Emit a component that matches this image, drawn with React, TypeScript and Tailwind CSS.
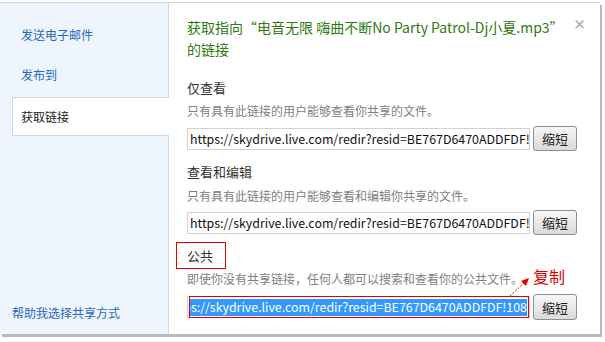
import React from 'react';

const URL_TEXT = 'https://skydrive.live.com/redir?resid=BE767D6470ADDFDF!108';

const ShortenButton: React.FC<{ tall?: boolean }> = ({ tall }) => (
  <button
    className={`ml-[3px] w-[44px] shrink-0 ${tall ? 'h-[26px]' : 'h-[25px]'} rounded-[3px] border border-[#8e8e8e] bg-gradient-to-b from-[#f7f7f7] to-[#dadada] text-[13px] leading-none text-[#222]`}
  >
    缩短
  </button>
);

const LinkRow: React.FC = () => (
  <div className="flex items-center">
    <div className="h-[22px] w-[343px] shrink-0 overflow-hidden whitespace-nowrap border border-[#d2d2d2] bg-white pl-[2px] text-[12.4px] leading-[20px] text-[#111]">
      {URL_TEXT}
    </div>
    <ShortenButton />
  </div>
);

const App: React.FC = () => {
  return (
    <div className="relative h-[342px] w-[605px] overflow-hidden bg-white font-['Noto_Sans_CJK_SC',sans-serif]">
      <div className="mt-[2px] flex h-[332px] w-[600px] border-t border-[#d4d4d4] shadow-[2px_3px_0_#b9b9b9]">
        {/* Side menu */}
        <div className="flex w-[169px] shrink-0 flex-col border-r border-[#cdd8e6] bg-[#eef5fd] pt-[12px]">
          <div className="flex h-[40px] items-center pl-[21px] text-[12px] text-[#2468c2]">发送电子邮件</div>
          <div className="flex h-[40px] items-center pl-[21px] text-[12px] text-[#2468c2]">发布到</div>
          <div className="relative z-10 -mr-px ml-[12px] mt-[2px] flex h-[39px] items-center border border-r-0 border-[#cdd8e6] bg-white pl-[8px] text-[12px] text-[#222]">
            获取链接
          </div>
          <div className="mt-auto mb-[12px] pl-[12px] text-[12px] text-[#2468c2]">帮助我选择共享方式</div>
        </div>

        {/* Content */}
        <div className="min-w-0 flex-1 pl-[18px] pt-[13px]">
          <div className="flex items-start">
            <div className="text-[14px] leading-[22px] text-[#2f7a12]">
              <div className="whitespace-nowrap">获取指向“电音无限 嗨曲不断No Party Patrol-Dj小夏.mp3”</div>
              <div>的链接</div>
            </div>
            <div className="ml-auto mr-[14px] mt-[1px] text-[13px] font-bold leading-[14px] text-[#a8a8a8]">×</div>
          </div>

          <div className="mt-[18px] text-[13px] leading-[20px] text-[#333]">仅查看</div>
          <div className="mt-[4px] text-[12px] leading-[18px] text-[#808080]">只有具有此链接的用户能够查看你共享的文件。</div>
          <div className="mt-[6px]">
            <LinkRow />
          </div>

          <div className="mt-[11px] text-[13px] leading-[20px] text-[#333]">查看和编辑</div>
          <div className="mt-[5px] text-[12px] leading-[18px] text-[#808080]">只有具有此链接的用户能够查看和编辑你共享的文件。</div>
          <div className="mt-[5px]">
            <LinkRow />
          </div>

          <div className="-ml-[11px] mt-[7px] flex h-[27px] w-[50px] items-center border border-[#e00000] pl-[10px] text-[13px] text-[#333]">
            公共
          </div>
          <div className="mt-[1px] text-[12px] leading-[18px] text-[#808080]">即使你没有共享链接，任何人都可以搜索和查看你的公共文件。</div>
          <div className="mt-[6px] flex items-center">
            <div className="flex h-[22px] w-[343px] shrink-0 items-center border border-[#d2d2d2] bg-white pl-[1px]">
              <div className="flex h-[22px] flex-1 items-center justify-end overflow-hidden whitespace-nowrap border border-[#e00000] p-px">
                <span className="bg-[#3399ff] text-[12.4px] leading-[17px] text-white">{URL_TEXT}</span>
              </div>
            </div>
            <ShortenButton tall />
          </div>
        </div>
      </div>

      {/* Annotation */}
      <div className="absolute left-[533px] top-[265px] text-[16px] leading-[22px] text-[#e00000]">复制</div>
      <svg className="absolute left-[505px] top-[274px]" width="28" height="26" viewBox="0 0 28 26">
        <line x1="5" y1="22" x2="21" y2="7" stroke="#e00000" strokeWidth="1" strokeDasharray="2 1.5" />
        <polygon points="24,4 16,7 21,12" fill="#e00000" />
      </svg>
    </div>
  );
};

export default App;
